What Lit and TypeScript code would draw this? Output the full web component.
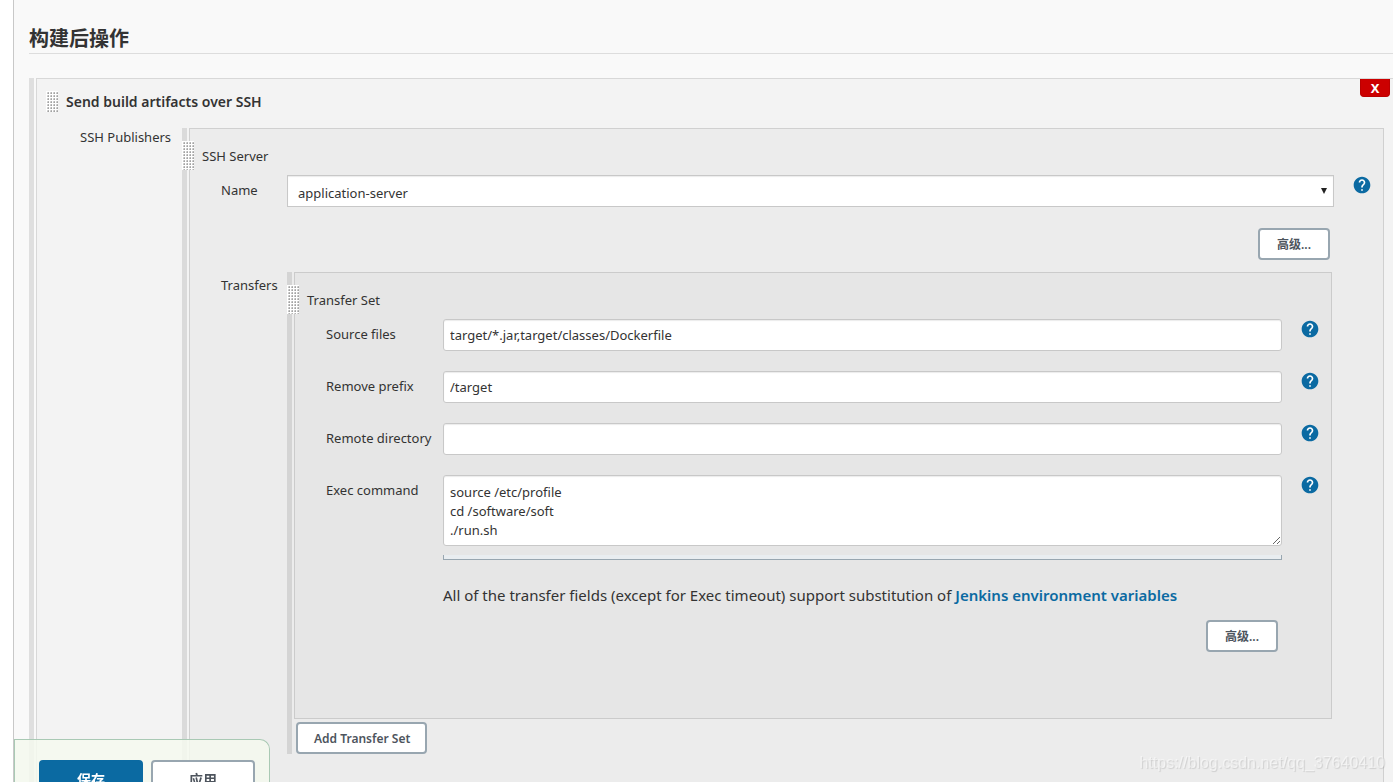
import { LitElement, html, css } from "lit";
import { customElement, property } from "lit/decorators.js";

const controls = css`
  * { box-sizing: border-box; }
  button, input, select, textarea { font: inherit; color: inherit; margin: 0; }
  .btn {
    height: 32px;
    padding: 2px 16px 0;
    border: 2px solid #98a6b0;
    border-radius: 4px;
    background: #fff;
    color: #4d545d;
    font-size: 12px;
    font-weight: 600;
    white-space: nowrap;
  }
`;

@customElement("help-button")
export class HelpButton extends LitElement {
  @property() label = "";

  static styles = css`
    :host { display: block; padding-left: 18px; }
    button { display: block; padding: 0; border: 0; background: none; cursor: pointer; }
    svg { display: block; width: 20px; height: 20px; fill: #0b6aa2; }
  `;

  render() {
    return html`<button type="button" aria-label=${"Help for feature: " + this.label}>
      <svg viewBox="0 0 24 24" aria-hidden="true">
        <circle cx="12" cy="12" r="8" fill="#fff"></circle>
        <path d="M12 2C6.48 2 2 6.48 2 12s4.48 10 10 10 10-4.48 10-10S17.52 2 12 2zm1 17h-2v-2h2v2zm2.07-7.75l-.9.92C13.45 12.9 13 13.5 13 15h-2v-.5c0-1.1.45-2.1 1.17-2.83l1.24-1.26c.37-.36.59-.86.59-1.41 0-1.1-.9-2-2-2s-2 .9-2 2H8c0-2.21 1.79-4 4-4s4 1.79 4 4c0 .88-.36 1.68-.93 2.25z"></path>
      </svg>
    </button>`;
  }
}

@customElement("drag-handle")
export class DragHandle extends LitElement {
  static styles = css`
    :host { display: block; width: 12px; cursor: move; background: #fff; }
    svg { display: block; width: 100%; height: 100%; }
  `;

  render() {
    return html`<svg aria-hidden="true">
      <defs>
        <pattern id="dots" width="3" height="3" patternUnits="userSpaceOnUse">
          <rect x="1" y="1" width="2" height="2" fill="#d6d6d6"></rect>
          <rect x="2" y="1" width="1" height="1" fill="#b4b4b4"></rect>
          <rect x="1" y="2" width="1" height="1" fill="#c4c4c4"></rect>
          <rect x="2" y="2" width="1" height="1" fill="#a2a2a2"></rect>
        </pattern>
      </defs>
      <rect width="100%" height="100%" fill="url(#dots)"></rect>
    </svg>`;
  }
}

@customElement("app-root")
export class AppRoot extends LitElement {
  static styles = [controls, css`
    :host {
      display: block;
      height: 100vh;
      overflow: hidden;
      background: #fff;
      color: #333;
      font: 13px/18px "Noto Sans", "Noto Sans CJK SC", sans-serif;
    }
    main {
      min-height: 100vh;
      margin-left: 13px;
      padding: 25px 0 0 15px;
      border-left: 1px solid #c8c8c8;
      background: #f9f9f9;
    }
    h2 {
      margin: 0 0 24px;
      border-bottom: 1px solid #ddd;
      font-size: 20px;
      font-weight: 700;
      line-height: 28px;
    }
    .chunk {
      position: relative;
      padding-left: 2px;
      border-left: 5px solid rgba(0, 0, 0, 0.1);
    }
    .panel { border: 1px solid #d0d0d0; background: #ececec; padding-top: 18px; }
    .panel.outer {
      position: relative;
      border-width: 1px 0 0 1px;
      border-color: #d8d8d8;
      background: #f3f3f3;
      padding: 12px 9px 40px 0;
    }
    .panel.server { padding-bottom: 60px; }
    .panel.transfer { background: #e6e6e6; border-color: #cbcbcb; padding-bottom: 66px; }
    .grip { position: absolute; z-index: 1; top: 13px; left: -5px; height: 29px; }
    .title { display: flex; align-items: center; gap: 8px; padding: 0 0 16px 9px; }
    .title drag-handle { height: 21px; }
    h3 { margin: 0; font-size: 14px; font-weight: 600; }
    .caption { padding: 0 0 10px 12px; }
    .publishers { display: grid; grid-template-columns: 145px 1fr; }
    .publishers > .label { padding-left: 43px; }
    .fields { display: grid; align-items: start; }
    .fields .label { padding-top: 6px; white-space: nowrap; }
    .server-fields { grid-template-columns: 97px 1fr 49px; }
    .server-fields > .label { padding-left: 31px; }
    .server-fields > .label.list { padding-top: 4px; }
    .transfer-fields { grid-template-columns: 148px 1fr 49px; row-gap: 20px; }
    .transfer-fields > .label { padding-left: 31px; }
    .text, .area, .select select {
      display: block;
      width: 100%;
      height: 32px;
      border: 1px solid #c8c8c8;
      border-radius: 3px;
      background: #fff;
      box-shadow: inset 0 1px 1px rgba(0, 0, 0, 0.08);
      padding: 0 6px;
    }
    .area { height: 71px; padding: 7px 6px; line-height: 19px; resize: vertical; }
    .select { display: grid; align-items: center; }
    .select > * { grid-area: 1 / 1; }
    .select select { appearance: none; border-radius: 0; padding: 3px 10px 0; }
    .select svg { justify-self: end; width: 6px; height: 6px; margin-right: 7px; fill: #222; pointer-events: none; z-index: 1; }
    .advanced { display: flex; justify-content: flex-end; padding-right: 4px; }
    .server-fields .advanced { grid-column: 2; padding-top: 21px; padding-bottom: 12px; }
    .advanced .btn { width: 72px; }
    .resizer { height: 5px; margin-top: 9px; border: 1px solid #98a6b0; border-top: 0; background: #e9edf0; }
    .note { padding-top: 3px; font-size: 15px; line-height: 24px; }
    .transfer-fields .advanced { grid-column: auto; padding: 0 4px 0 0; }
    a { color: #0b6aa2; font-weight: 600; text-decoration: none; }
    .tight { display: grid; gap: 13px; grid-column: 2; }
    .transfers { margin-right: 2px; }
    .add { display: block; width: 131px; margin: 3px 0 0 2px; }
    .close {
      position: absolute;
      top: 0;
      right: 3px;
      width: 30px;
      height: 18px;
      padding: 0;
      border: 1px solid #b00;
      border-top: 0;
      border-radius: 0 0 4px 4px;
      background: #c00;
      color: #fff;
      font-size: 13px;
      font-weight: 700;
      line-height: 18px;
    }
    .bar {
      position: fixed;
      z-index: 2;
      left: 14px;
      bottom: -38px;
      display: flex;
      gap: 8px;
      padding: 20px 14px 20px 24px;
      border: 1px solid #a9c9b4;
      border-bottom: 0;
      border-radius: 0 10px 0 0;
      background: rgba(245, 249, 239, 0.85);
    }
    .bar .btn { width: 104px; height: 40px; padding-top: 0; font-size: 14px; }
    .bar .primary { border-color: #0b6aa2; background: #0b6aa2; color: #fff; }
    .watermark {
      position: fixed;
      right: 8px;
      bottom: 9px;
      color: rgba(255, 255, 255, 0.5);
      font: 16px/20px "Liberation Sans", sans-serif;
      text-shadow: 1px 1px 1px rgba(0, 0, 0, 0.12);
      pointer-events: none;
    }
  `];

  private textRow(id: string, label: string, value: string) {
    return html`
      <label class="label" for=${id}>${label}</label>
      <input class="text" id=${id} type="text" .value=${value}>
      <help-button .label=${label}></help-button>
    `;
  }

  private transferSet() {
    return html`
      <drag-handle class="grip"></drag-handle>
      <div class="panel transfer">
        <div class="caption">Transfer Set</div>
        <div class="fields transfer-fields">
          ${this.textRow("source", "Source files", "target/*.jar,target/classes/Dockerfile")}
          ${this.textRow("prefix", "Remove prefix", "/target")}
          ${this.textRow("remote", "Remote directory", "")}
          <label class="label" for="exec">Exec command</label>
          <div>
            <textarea class="area" id="exec" spellcheck="false" .value=${"source /etc/profile\ncd /software/soft\n./run.sh"}></textarea>
            <div class="resizer"></div>
          </div>
          <help-button .label=${"Exec command"}></help-button>
          <div class="tight">
            <div class="note">All of the transfer fields (except for Exec timeout) support substitution of <a href="#env">Jenkins environment variables</a></div>
            <div class="advanced"><button class="btn" type="button">高级...</button></div>
          </div>
        </div>
      </div>
    `;
  }

  render() {
    return html`
      <main>
        <h2>构建后操作</h2>
        <section class="chunk">
          <div class="panel outer">
            <button class="close" type="button" aria-label="Delete">X</button>
            <div class="title">
              <drag-handle></drag-handle>
              <h3>Send build artifacts over SSH</h3>
            </div>
            <div class="publishers">
              <div class="label">SSH Publishers</div>
              <div class="chunk">
                <drag-handle class="grip"></drag-handle>
                <div class="panel server">
                  <div class="caption">SSH Server</div>
                  <div class="fields server-fields">
                    <label class="label" for="server">Name</label>
                    <div class="select">
                      <select id="server"><option>application-server</option></select>
                      <svg viewBox="0 0 6 6" aria-hidden="true"><path d="M0 0h6L3 6z"></path></svg>
                    </div>
                    <help-button .label=${"Name"}></help-button>
                    <div class="advanced"><button class="btn" type="button">高级...</button></div>
                  </div>
                  <div class="fields server-fields">
                    <div class="label list">Transfers</div>
                    <div class="chunk transfers">
                      ${this.transferSet()}
                      <button class="btn add" type="button">Add Transfer Set</button>
                    </div>
                  </div>
                </div>
              </div>
            </div>
          </div>
        </section>
      </main>
      <div class="bar">
        <button class="btn primary" type="submit">保存</button>
        <button class="btn" type="button">应用</button>
      </div>
      <div class="watermark">https://blog.csdn.net/qq_37640410</div>
    `;
  }
}
